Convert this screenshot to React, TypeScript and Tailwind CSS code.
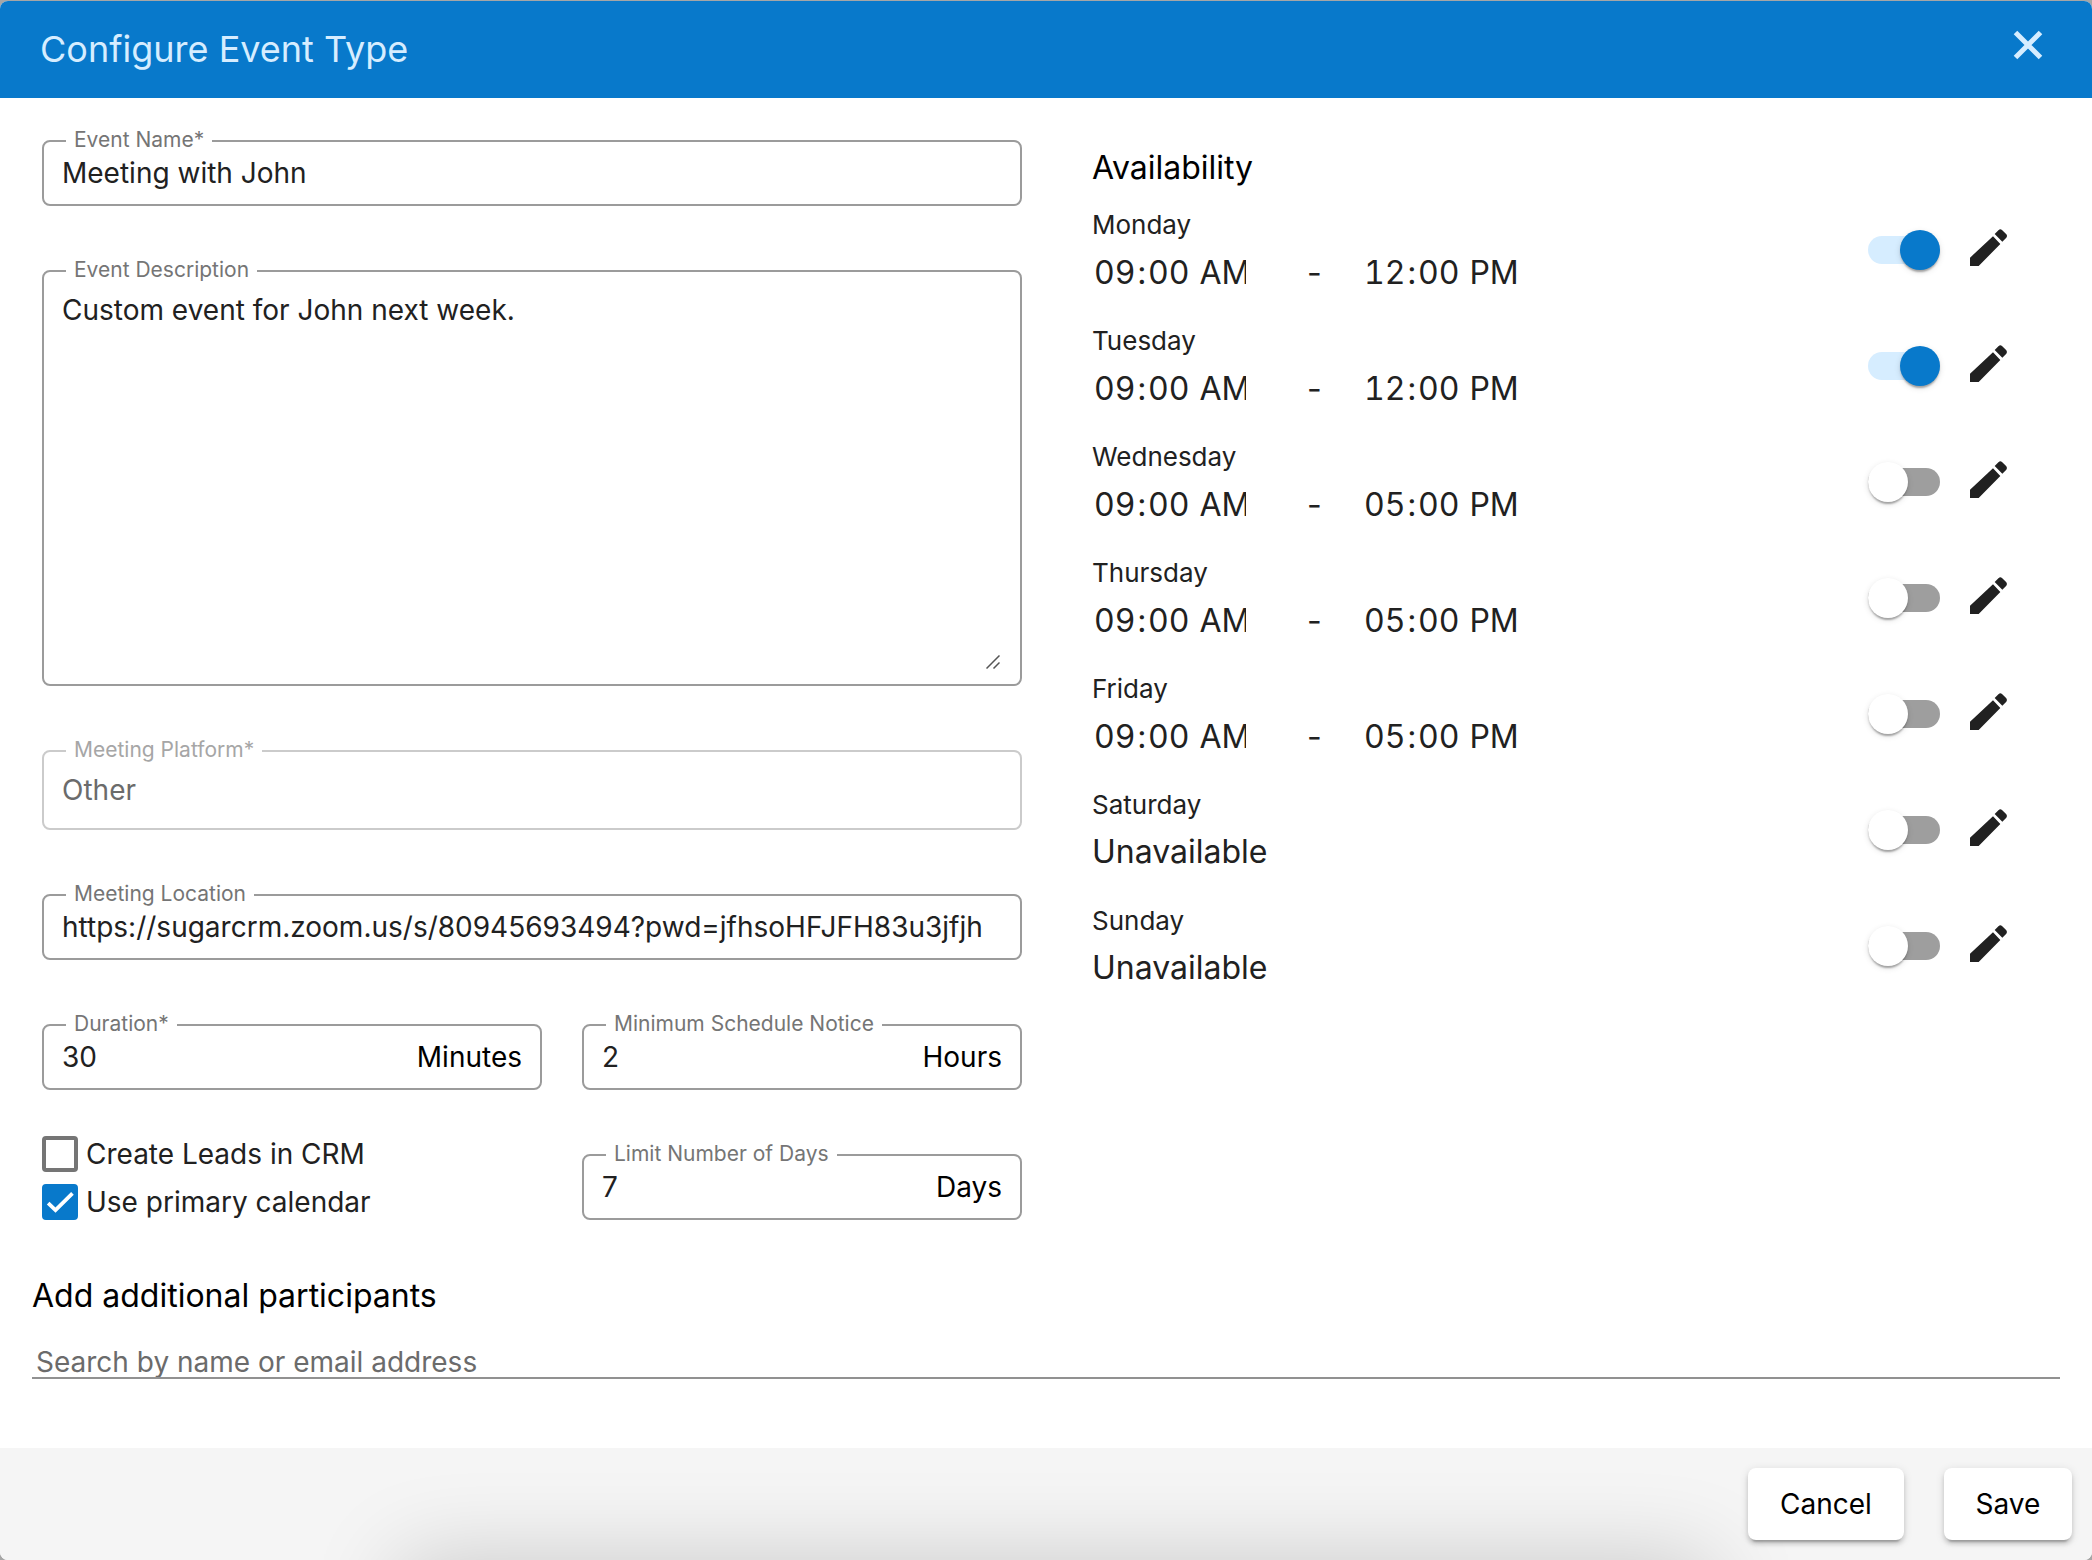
import React, { useId, useState } from "react";

type FieldProps = {
  label: string;
  disabled?: boolean;
  className?: string;
  children: (id: string) => React.ReactNode;
};

function Field({ label, disabled = false, className = "", children }: FieldProps) {
  const id = useId();
  return (
    <div className={`relative flex rounded-lg border-2 ${disabled ? "border-[#cbcbcb]" : "border-[#9b9b9b]"} ${className}`}>
      <label
        htmlFor={id}
        className={`absolute -top-4 left-[22px] bg-white px-2 text-[21px] leading-7 ${disabled ? "text-[#a6a6a6]" : "text-[#757575]"}`}
      >
        {label}
      </label>
      {children(id)}
    </div>
  );
}

function TextField({ label, value, suffix, disabled = false }: { label: string; value: string; suffix?: string; disabled?: boolean }) {
  const [text, setText] = useState(value);
  return (
    <Field label={label} disabled={disabled} className={disabled ? "h-20" : "h-[66px]"}>
      {(id) => (
        <div className="flex min-w-0 flex-1 items-center px-[18px]">
          <input
            id={id}
            value={text}
            disabled={disabled}
            onChange={(e) => setText(e.target.value)}
            className={`w-0 flex-1 bg-transparent text-[28px] leading-9 outline-none ${disabled ? "text-[#6b6b6b]" : "text-[#212121]"}`}
          />
          {suffix && <span className="text-[28px] leading-9 text-black">{suffix}</span>}
        </div>
      )}
    </Field>
  );
}

function CheckBox({ label, initial }: { label: string; initial: boolean }) {
  const [on, setOn] = useState(initial);
  return (
    <label className="flex h-9 items-center gap-2 text-[28px] leading-9 text-[#212121]">
      <span className="relative flex size-9 shrink-0">
        <input
          type="checkbox"
          checked={on}
          onChange={(e) => setOn(e.target.checked)}
          className="size-9 appearance-none rounded border-4 border-[#757575] checked:border-[#0879cb] checked:bg-[#0879cb]"
        />
        {on && (
          <svg viewBox="0 0 24 24" className="pointer-events-none absolute inset-0 size-9" fill="none" stroke="#fff" strokeWidth="2.5">
            <path d="M4.1 12.7 9 17.4 20.3 6.3" />
          </svg>
        )}
      </span>
      {label}
    </label>
  );
}

type Day = { name: string; from?: string; to?: string; on: boolean };

const days: Day[] = [
  { name: "Monday", from: "09:00", to: "12:00", on: true },
  { name: "Tuesday", from: "09:00", to: "12:00", on: true },
  { name: "Wednesday", from: "09:00", to: "17:00", on: false },
  { name: "Thursday", from: "09:00", to: "17:00", on: false },
  { name: "Friday", from: "09:00", to: "17:00", on: false },
  { name: "Saturday", on: false },
  { name: "Sunday", on: false },
];

function TimeInput({ label, value, className }: { label: string; value: string; className: string }) {
  return (
    <input
      type="time"
      aria-label={label}
      value={value}
      readOnly
      className={`h-[50px] overflow-hidden bg-transparent p-0 text-[32px] tabular-nums outline-none [&::-webkit-calendar-picker-indicator]:hidden [&::-webkit-datetime-edit-ampm-field]:px-0.5 [&::-webkit-datetime-edit-hour-field]:px-0.5 [&::-webkit-datetime-edit-minute-field]:px-0.5 ${className}`}
    />
  );
}

function DayRow({ day }: { day: Day }) {
  const [on, setOn] = useState(day.on);
  return (
    <li className="flex h-[116px] items-start justify-between">
      <div className="text-[#212121]">
        <div className="pt-px text-[26px] leading-10">{day.name}</div>
        {day.from && day.to ? (
          <div className="flex items-center pt-[3px] text-[32px] leading-[50px]">
            <TimeInput label={`${day.name} start`} value={day.from} className="w-[154px]" />
            <span className="w-[116px] pl-[61px]">-</span>
            <TimeInput label={`${day.name} end`} value={day.to} className="w-[180px]" />
          </div>
        ) : (
          <div className="pt-0.5 text-[32px] leading-[50px]">Unavailable</div>
        )}
      </div>
      <div className="flex items-start gap-6 pt-5">
        <span className="relative flex h-[52px] w-[72px] items-center">
          <input
            type="checkbox"
            role="switch"
            aria-label={`${day.name} available`}
            checked={on}
            onChange={(e) => setOn(e.target.checked)}
            className="h-7 w-[72px] appearance-none rounded-full bg-[#9e9e9e] checked:bg-[#d6edff]"
          />
          <span
            className={`pointer-events-none absolute top-1.5 size-10 rounded-full shadow-[0_4px_2px_-2px_rgba(0,0,0,0.2),0_2px_2px_rgba(0,0,0,0.14),0_2px_6px_rgba(0,0,0,0.12)] ${on ? "right-0 bg-[#0879cb]" : "left-0 bg-white"}`}
          />
        </span>
        <button type="button" aria-label={`Edit ${day.name}`}>
          <svg viewBox="10 11 144 144" className="size-12" fill="#212121">
            <path d="M28 112 97 48l22 23-65 66H28zM102 41l12-12q5-4 10 0l13 13q4 5 0 10l-12 12z" />
          </svg>
        </button>
      </div>
    </li>
  );
}

export default function App() {
  const [description, setDescription] = useState("Custom event for John next week.");
  return (
    <div className="min-h-screen bg-[#a6a6a6] pt-px font-[Inter,sans-serif]">
      <form className="flex min-h-[calc(100vh-1px)] flex-col overflow-hidden rounded-lg bg-white" onSubmit={(e) => e.preventDefault()}>
        <header className="flex h-[97px] items-center justify-between bg-[#0879cb] px-10 pb-0.5 text-[#d6edff]">
          <h1 className="text-[36px] leading-[48px]">Configure Event Type</h1>
          <button type="button" aria-label="Close" className="-mt-2">
            <svg viewBox="0 0 48 48" className="size-12" fill="none" stroke="currentColor" strokeWidth="5">
              <path d="M11.5 11.5l25 25M36.5 11.5l-25 25" />
            </svg>
          </button>
        </header>

        <div className="flex-1 px-8">
          <div className="flex gap-[70px]">
            <section className="ml-2.5 flex w-[980px] shrink-0 flex-col gap-16 pt-[42px]">
              <TextField label="Event Name*" value="Meeting with John" />
              <Field label="Event Description" className="h-[416px] p-[18px] pt-5">
                {(id) => (
                  <>
                    <textarea
                      id={id}
                      value={description}
                      onChange={(e) => setDescription(e.target.value)}
                      className="flex-1 resize-none bg-transparent text-[28px] leading-9 text-[#212121] outline-none"
                    />
                    <svg
                      viewBox="0 0 14 14"
                      className="pointer-events-none absolute right-5 bottom-[15px] size-3.5"
                      stroke="#555"
                      strokeWidth="1.5"
                    >
                      <path d="M.5 13.5l13-13M7.5 13.5l6-6" />
                    </svg>
                  </>
                )}
              </Field>
              <TextField label="Meeting Platform*" value="Other" disabled />
              <TextField label="Meeting Location" value="https://sugarcrm.zoom.us/s/80945693494?pwd=jfhsoHFJFH83u3jfjh" />
              <div className="grid grid-cols-[500fr_440fr] gap-x-10 gap-y-16">
                <TextField label="Duration*" value="30" suffix="Minutes" />
                <TextField label="Minimum Schedule Notice" value="2" suffix="Hours" />
                <div className="-mt-[18px] flex flex-col gap-3">
                  <CheckBox label="Create Leads in CRM" initial={false} />
                  <CheckBox label="Use primary calendar" initial={true} />
                </div>
                <TextField label="Limit Number of Days" value="7" suffix="Days" />
              </div>
            </section>

            <section className="min-w-0 flex-1 pt-[46px] pr-12">
              <h2 className="text-[32px] leading-[48px] text-black">Availability</h2>
              <ul className="pt-3">
                {days.map((d) => (
                  <DayRow key={d.name} day={d} />
                ))}
              </ul>
            </section>
          </div>

          <label htmlFor="participants" className="mt-[52px] block text-[32px] leading-[48px] text-black">
            Add additional participants
          </label>
          <input
            id="participants"
            placeholder="Search by name or email address"
            className="mt-[23px] block h-9 w-full border-b-2 border-[#919191] pt-1 pl-1 text-[28px] outline-none placeholder:text-[#6b6b6b]"
          />
        </div>

        <footer className="relative flex h-28 items-start justify-end gap-10 overflow-hidden bg-[#f5f5f5] px-5 pt-5">
          <span className="pointer-events-none absolute top-full right-[380px] left-[400px] h-40 shadow-[0_0_90px_rgba(0,0,0,0.18)]" />
          <button
            type="button"
            className="relative h-[72px] w-[156px] rounded-lg bg-white text-[28px] text-black shadow-[0_6px_2px_-4px_rgba(0,0,0,0.2),0_4px_4px_rgba(0,0,0,0.14),0_2px_10px_rgba(0,0,0,0.12)]"
          >
            Cancel
          </button>
          <button
            type="submit"
            className="relative h-[72px] w-32 rounded-lg bg-white text-[28px] text-black shadow-[0_6px_2px_-4px_rgba(0,0,0,0.2),0_4px_4px_rgba(0,0,0,0.14),0_2px_10px_rgba(0,0,0,0.12)]"
          >
            Save
          </button>
        </footer>
      </form>
    </div>
  );
}
